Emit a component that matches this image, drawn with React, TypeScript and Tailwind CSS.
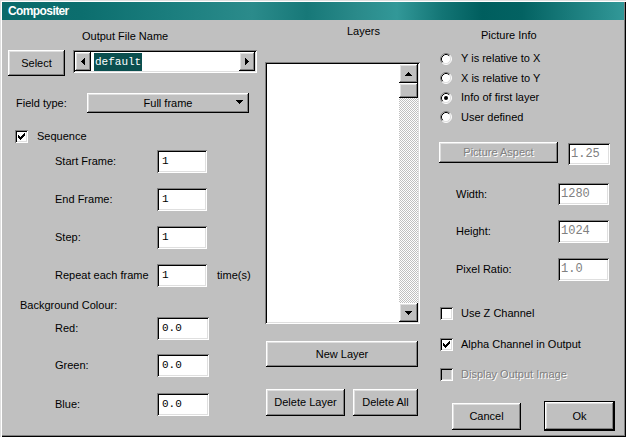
import React from "react";

// classic 3d borders
const raised =
  "bg-[#c0c0c0] shadow-[inset_-1px_-1px_0_#000,inset_1px_1px_0_#fff,inset_-2px_-2px_0_#808080,inset_2px_2px_0_#dfdfdf]";
const sunken =
  "bg-white shadow-[inset_1px_1px_0_#808080,inset_-1px_-1px_0_#fff,inset_2px_2px_0_#000,inset_-2px_-2px_0_#dfdfdf]";
const sunkenGray =
  "bg-[#c0c0c0] shadow-[inset_1px_1px_0_#808080,inset_-1px_-1px_0_#fff,inset_2px_2px_0_#000,inset_-2px_-2px_0_#dfdfdf]";
const grayText = "text-[#808080] [text-shadow:1px_1px_0_#fff]";
const mono = "[font-family:'Liberation_Mono','Courier_New',monospace]";

const arrows: Record<string, { w: number; h: number; d: string }> = {
  up: { w: 7, h: 4, d: "M3 0h1v1h-1z M2 1h3v1h-3z M1 2h5v1h-5z M0 3h7v1h-7z" },
  down: { w: 7, h: 4, d: "M0 0h7v1h-7z M1 1h5v1h-5z M2 2h3v1h-3z M3 3h1v1h-1z" },
  left: { w: 4, h: 7, d: "M3 0h1v7h-1z M2 1h1v5h-1z M1 2h1v3h-1z M0 3h1v1h-1z" },
  right: { w: 4, h: 7, d: "M0 0h1v7h-1z M1 1h1v5h-1z M2 2h1v3h-1z M3 3h1v1h-1z" },
};

function Arrow({ dir, className = "" }: { dir: string; className?: string }) {
  const a = arrows[dir];
  return (
    <svg width={a.w} height={a.h} viewBox={`0 0 ${a.w} ${a.h}`} shapeRendering="crispEdges" className={className}>
      <path d={a.d} fill="#000" />
    </svg>
  );
}

function Check({ checked = false, disabled = false }: { checked?: boolean; disabled?: boolean }) {
  return (
    <div className={`w-[13px] h-[13px] shrink-0 ${disabled ? sunkenGray : sunken}`}>
      {checked && (
        <svg width="13" height="13" viewBox="0 0 13 13" shapeRendering="crispEdges">
          <path
            d="M9 3h1v1h-1z M8 4h2v1h-2z M3 5h1v1h-1z M7 5h3v1h-3z M3 6h2v1h-2z M6 6h3v1h-3z M3 7h5v1h-5z M4 8h3v1h-3z M5 9h1v1h-1z"
            fill="#000"
          />
        </svg>
      )}
    </div>
  );
}

function Radio({ on = false }: { on?: boolean }) {
  return (
    <svg width="12" height="12" viewBox="0 0 12 12" className="shrink-0">
      <circle cx="6" cy="6" r="5" fill="#fff" />
      <path d="M2.11 9.89 A5.5 5.5 0 0 1 9.89 2.11" stroke="#808080" fill="none" />
      <path d="M9.89 2.11 A5.5 5.5 0 0 1 2.11 9.89" stroke="#fff" fill="none" />
      <path d="M2.82 9.18 A4.5 4.5 0 0 1 9.18 2.82" stroke="#000" fill="none" />
      <path d="M9.18 2.82 A4.5 4.5 0 0 1 2.82 9.18" stroke="#dfdfdf" fill="none" />
      {on && <circle cx="6" cy="6" r="2" fill="#000" />}
    </svg>
  );
}

export default function App() {
  return (
    <div className="w-[626px] h-[437px] bg-[#c0c0c0] overflow-hidden text-black text-[11px] leading-[13px] [font-family:'Liberation_Sans',Arial,sans-serif] shadow-[inset_1px_1px_0_#dfdfdf,inset_2px_2px_0_#fff,inset_-1px_-1px_0_#000,inset_-2px_-2px_0_#808080]">
      {/* title bar */}
      <div className="mx-[2px] pt-[2px]">
        <div className="h-[18px] flex items-center pl-[6px] text-white font-bold text-[12px] tracking-[-0.6px] bg-[linear-gradient(90deg,#0a6a6a_0px,#0c6e6e_80px,#1b7e7e_170px,#2b8b8b_250px,#177878_305px,#2a8a8a_355px,#329898_395px,#137575_440px,#005e5e_480px,#036262_520px,#187a7a_565px,#329898_622px)]">
          Compositer
        </div>
      </div>

      <div className="flex">
        {/* left column */}
        <div className="w-[258px] flex flex-col">
          <div className="mt-[10px] pl-[82px]">Output File Name</div>
          <div className="mt-[7px] flex items-start">
            <button className={`ml-[8px] w-[57px] h-[26px] ${raised}`}>Select</button>
            <div className={`ml-[8px] w-[184px] h-[23px] ${sunken} flex items-center px-[2px]`}>
              <div className={`w-[16px] h-[19px] ${raised} flex items-center justify-center`}>
                <Arrow dir="left" />
              </div>
              <div className="flex-1 pl-[3px]">
                <span className={`${mono} inline-block px-px h-[18px] leading-[18px] bg-[#0b4f4f] text-white`}>default</span>
              </div>
              <div className={`w-[16px] h-[19px] ${raised} flex items-center justify-center`}>
                <Arrow dir="right" />
              </div>
            </div>
          </div>

          <div className="mt-[17px] flex items-center h-[20px]">
            <span className="ml-[16px] w-[71px]">Field type:</span>
            <div className={`relative w-[162px] h-[20px] ${raised} flex items-center justify-center`}>
              Full frame
              <Arrow dir="down" className="absolute right-[6px] top-[7px]" />
            </div>
          </div>

          <div className="mt-[17px] flex items-center h-[13px]">
            <div className="ml-[15px]">
              <Check checked />
            </div>
            <span className="ml-[9px]">Sequence</span>
          </div>

          <div className="mt-[7px] flex items-center">
            <span className="ml-[55px] w-[102px]">Start Frame:</span>
            <div className={`w-[50px] h-[23px] ${sunken} ${mono} flex items-center pl-[5px]`}>1</div>
          </div>
          <div className="mt-[15px] flex items-center">
            <span className="ml-[55px] w-[102px]">End Frame:</span>
            <div className={`w-[50px] h-[23px] ${sunken} ${mono} flex items-center pl-[5px]`}>1</div>
          </div>
          <div className="mt-[15px] flex items-center">
            <span className="ml-[55px] w-[102px]">Step:</span>
            <div className={`w-[50px] h-[23px] ${sunken} ${mono} flex items-center pl-[5px]`}>1</div>
          </div>
          <div className="mt-[15px] flex items-center">
            <span className="ml-[55px] w-[102px]">Repeat each frame</span>
            <div className={`w-[50px] h-[23px] ${sunken} ${mono} flex items-center pl-[5px]`}>1</div>
            <span className="ml-[10px]">time(s)</span>
          </div>

          <div className="mt-[12px] ml-[20px]">Background Colour:</div>
          <div className="mt-[5px] flex items-center">
            <span className="ml-[55px] w-[102px]">Red:</span>
            <div className={`w-[52px] h-[23px] ${sunken} ${mono} flex items-center pl-[5px]`}>0.0</div>
          </div>
          <div className="mt-[14px] flex items-center">
            <span className="ml-[55px] w-[102px]">Green:</span>
            <div className={`w-[52px] h-[23px] ${sunken} ${mono} flex items-center pl-[5px]`}>0.0</div>
          </div>
          <div className="mt-[16px] flex items-center">
            <span className="ml-[55px] w-[102px]">Blue:</span>
            <div className={`w-[52px] h-[23px] ${sunken} ${mono} flex items-center pl-[5px]`}>0.0</div>
          </div>
        </div>

        {/* middle column: layers */}
        <div className="ml-[7px] w-[155px] flex flex-col">
          <div className="mt-[5px] pl-[82px]">Layers</div>
          <div className={`mt-[24px] w-[155px] h-[262px] ${sunken} flex justify-end p-[2px]`}>
            <div className="w-[19px] h-full flex flex-col bg-[repeating-conic-gradient(#c0c0c0_0%_25%,#fff_0%_50%)] bg-[length:2px_2px]">
              <div className={`h-[19px] ${raised} flex items-center justify-center`}>
                <Arrow dir="up" />
              </div>
              <div className={`h-[15px] ${raised}`} />
              <div className="flex-1" />
              <div className={`h-[19px] ${raised} flex items-center justify-center`}>
                <Arrow dir="down" />
              </div>
            </div>
          </div>
          <button className={`mt-[17px] ml-[1px] w-[152px] h-[26px] ${raised}`}>New Layer</button>
          <div className="mt-[22px] flex">
            <button className={`ml-[1px] w-[79px] h-[27px] ${raised}`}>Delete Layer</button>
            <button className={`ml-[8px] w-[65px] h-[27px] ${raised}`}>Delete All</button>
          </div>
        </div>

        {/* right column: picture info */}
        <div className="w-[206px] flex flex-col">
          <div className="mt-[9px] pl-[61px]">Picture Info</div>
          <div className="mt-[7px] flex flex-col">
            {[
              ["Y is relative to X", false],
              ["X is relative to Y", false],
              ["Info of first layer", true],
              ["User defined", false],
            ].map(([label, on]) => (
              <div key={label as string} className="h-[19.5px] flex items-center pl-[20px]">
                <Radio on={on as boolean} />
                <span className="ml-[9px]">{label as string}</span>
              </div>
            ))}
          </div>

          <div className="mt-[15px] flex items-start">
            <button className={`ml-[19px] w-[119px] h-[21px] ${raised} ${grayText}`}>Picture Aspect</button>
            <div className={`ml-[10px] mt-[1px] w-[42px] h-[22px] ${sunken} ${mono} text-[12px] text-[#808080] flex items-center pl-[3px]`}>
              1.25
            </div>
          </div>

          <div className="mt-[18px] flex items-center">
            <span className="ml-[36px] w-[102px]">Width:</span>
            <div className={`w-[51px] h-[22px] ${sunken} ${mono} text-[12px] text-[#808080] flex items-center pl-[3px]`}>1280</div>
          </div>
          <div className="mt-[15px] flex items-center">
            <span className="ml-[36px] w-[102px]">Height:</span>
            <div className={`w-[51px] h-[23px] ${sunken} ${mono} text-[12px] text-[#808080] flex items-center pl-[3px]`}>1024</div>
          </div>
          <div className="mt-[15px] flex items-center">
            <span className="ml-[36px] w-[102px]">Pixel Ratio:</span>
            <div className={`w-[51px] h-[23px] ${sunken} ${mono} text-[12px] text-[#808080] flex items-center pl-[3px]`}>1.0</div>
          </div>

          <div className="mt-[26px] flex items-center h-[13px] pl-[20px]">
            <Check />
            <span className="ml-[8px]">Use Z Channel</span>
          </div>
          <div className="mt-[18px] flex items-center h-[13px] pl-[20px]">
            <Check checked />
            <span className="ml-[8px]">Alpha Channel in Output</span>
          </div>
          <div className="mt-[17px] flex items-center h-[13px] pl-[20px]">
            <Check disabled />
            <span className={`ml-[8px] ${grayText}`}>Display Output Image</span>
          </div>

          <div className="mt-[20px] flex items-start">
            <button className={`ml-[32px] mt-[2px] w-[69px] h-[27px] ${raised}`}>Cancel</button>
            <div className="ml-[23px] w-[71px] h-[30px] border border-black">
              <button className={`w-full h-full ${raised}`}>Ok</button>
            </div>
          </div>
        </div>
      </div>
    </div>
  );
}
